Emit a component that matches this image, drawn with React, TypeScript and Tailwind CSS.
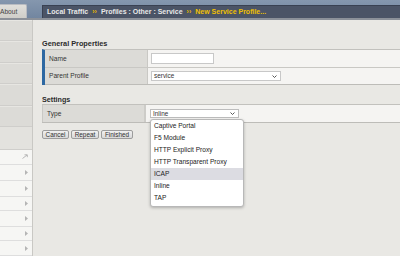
import React from "react";

function Chevron({ className = "" }: { className?: string }) {
  return (
    <svg width="5" height="3" viewBox="0 0 5 3" className={className}>
      <path d="M0.5 0.5 L2.5 2.5 L4.5 0.5" fill="none" stroke="#444" strokeWidth="0.9" />
    </svg>
  );
}

function Arrow() {
  return (
    <svg width="3" height="5" viewBox="0 0 3 5">
      <path d="M0 0 L3 2.5 L0 5 Z" fill="#b5b5b5" />
    </svg>
  );
}

function Diag() {
  return (
    <svg width="6" height="5" viewBox="0 0 6 5">
      <path d="M0.5 4.5 L5 1 M2.5 0.8 L5.3 0.8 L5.3 3.2" fill="none" stroke="#b0b0b0" strokeWidth="0.9" />
    </svg>
  );
}

export default function App() {
  const greyRows = [22, 22, 22, 22, 22];
  const whiteRows = [16, 16, 16, 15, 16, 15, 15];
  const items = [
    "Captive Portal",
    "F5 Module",
    "HTTP Explicit Proxy",
    "HTTP Transparent Proxy",
    "ICAP",
    "Inline",
    "TAP",
  ];
  return (
    <div className="w-[400px] h-[256px] overflow-hidden relative bg-[#e9e8e4] font-['Liberation_Sans',Arial,sans-serif] text-[#333]">
      {/* header */}
      <div className="h-[20px] bg-gradient-to-b from-[#8597ae] to-[#7286a0] border-b-2 border-[#8c9199] flex items-end">
        <div className="w-[27px] h-[14px] mb-0 bg-gradient-to-b from-[#e0dfdb] to-[#cfcec9] border-t border-r border-[#b9bcc2] rounded-tr-[2px] text-[6.6px] leading-[13px] text-[#444] pl-[0px]">
          About
        </div>
        <div className="ml-[15px] flex-1 h-[13px] bg-[#4b5466] border-t border-l border-[#394152] flex items-center pl-[4px] text-[7px] font-bold text-[#e8e8e8] whitespace-nowrap">
          <span>Local Traffic</span>
          <span className="text-[#e6b600] mx-[4px]">››</span>
          <span>Profiles : Other : Service</span>
          <span className="text-[#e6b600] mx-[4px]">››</span>
          <span className="text-[#f0c000]">New Service Profile...</span>
        </div>
      </div>

      {/* body */}
      <div className="flex h-[236px]">
        {/* sidebar */}
        <div className="w-[33px] flex flex-col border-r border-[#c9c8c4]">
          {greyRows.map((h, i) => (
            <div
              key={i}
              style={{ height: h }}
              className="bg-[#dcdbd7] border-b border-[#cfcecb] shadow-[inset_0_1px_0_#e7e6e2]"
            />
          ))}
          <div className="h-[23px] bg-[#e3e2de] border-b border-[#cfcecb]" />
          {whiteRows.map((h, i) => (
            <div
              key={i}
              style={{ height: h }}
              className="bg-[#f6f6f4] border-b border-[#dedede] flex items-center justify-end pr-[4px]"
            >
              {i === 0 ? <Diag /> : <Arrow />}
            </div>
          ))}
        </div>

        {/* main */}
        <div className="flex-1 pl-[9px] pt-[19px]">
          <div className="h-[10px] leading-[10px] text-[7.3px] font-bold text-[#2b2b2b]">General Properties</div>
          <div className="border-t border-[#c2c1bd] border-l-[3px] border-l-[#2e68a2]">
            <div className="flex h-[18px] border-b border-[#c9c8c4]">
              <div className="w-[103px] bg-[#dcdbd7] border-r border-[#c9c8c4] text-[6.6px] leading-[17px] pl-[4px]">Name</div>
              <div className="flex-1 bg-[#f5f4f2] flex items-center pl-[3px]">
                <div className="w-[63px] h-[11px] bg-white border border-[#c8c8c8]" />
              </div>
            </div>
            <div className="flex h-[17px] border-b border-[#bdbcb8]">
              <div className="w-[103px] bg-[#dcdbd7] border-r border-[#c9c8c4] text-[6.6px] leading-[16px] pl-[4px]">Parent Profile</div>
              <div className="flex-1 bg-[#f5f4f2] flex items-center pl-[3px]">
                <div className="w-[130px] h-[10px] bg-white border border-[#c8c8c8] flex items-center justify-between pl-[2px] pr-[3px] text-[6.4px]">
                  <span className="leading-[8px]">service</span>
                  <Chevron />
                </div>
              </div>
            </div>
          </div>

          <div className="mt-[10px] h-[9px] leading-[9px] text-[7.2px] font-bold text-[#2b2b2b]">Settings</div>
          <div className="border-t border-[#c2c1bd]">
            <div className="flex h-[18px] border-b border-[#bdbcb8]">
              <div className="w-[104px] bg-[#dcdbd7] border-l border-[#c9c8c4] border-r-2 border-r-[#cdccc8] text-[6.6px] leading-[17px] pl-[4px]">Type</div>
              <div className="flex-1 bg-[#f5f4f2] flex items-center pl-[4px]">
                <div className="w-[89px] h-[9px] bg-white border border-[#bdbdbd] flex items-center justify-between pl-[2px] pr-[3px] text-[6.4px]">
                  <span className="leading-[7px]">Inline</span>
                  <Chevron />
                </div>
              </div>
            </div>
          </div>

          <div className="mt-[7px] flex gap-[2px]">
            {[
              ["Cancel", "w-[27px]"],
              ["Repeat", "w-[28px]"],
              ["Finished", "w-[32px]"],
            ].map(([t, w]) => (
              <div
                key={t}
                className={`${w} h-[9px] bg-gradient-to-b from-[#f0f0f0] to-[#d9d9d9] border border-[#9c9c9c] rounded-[2px] text-[6.4px] leading-[7px] text-center text-[#333]`}
              >
                {t}
              </div>
            ))}
          </div>
        </div>
      </div>

      {/* dropdown menu */}
      <div className="absolute left-[150px] top-[119px] w-[94px] h-[88px] bg-white border border-[#b8b8b8] rounded-[3px] shadow-[0_1px_3px_rgba(0,0,0,0.25)] pt-0">
        {items.map((t) => (
          <div
            key={t}
            className={`h-[12px] leading-[12px] pl-[3px] text-[6.6px] text-[#222] ${t === "ICAP" ? "bg-[#dcdce2]" : ""}`}
          >
            {t}
          </div>
        ))}
      </div>
    </div>
  );
}
